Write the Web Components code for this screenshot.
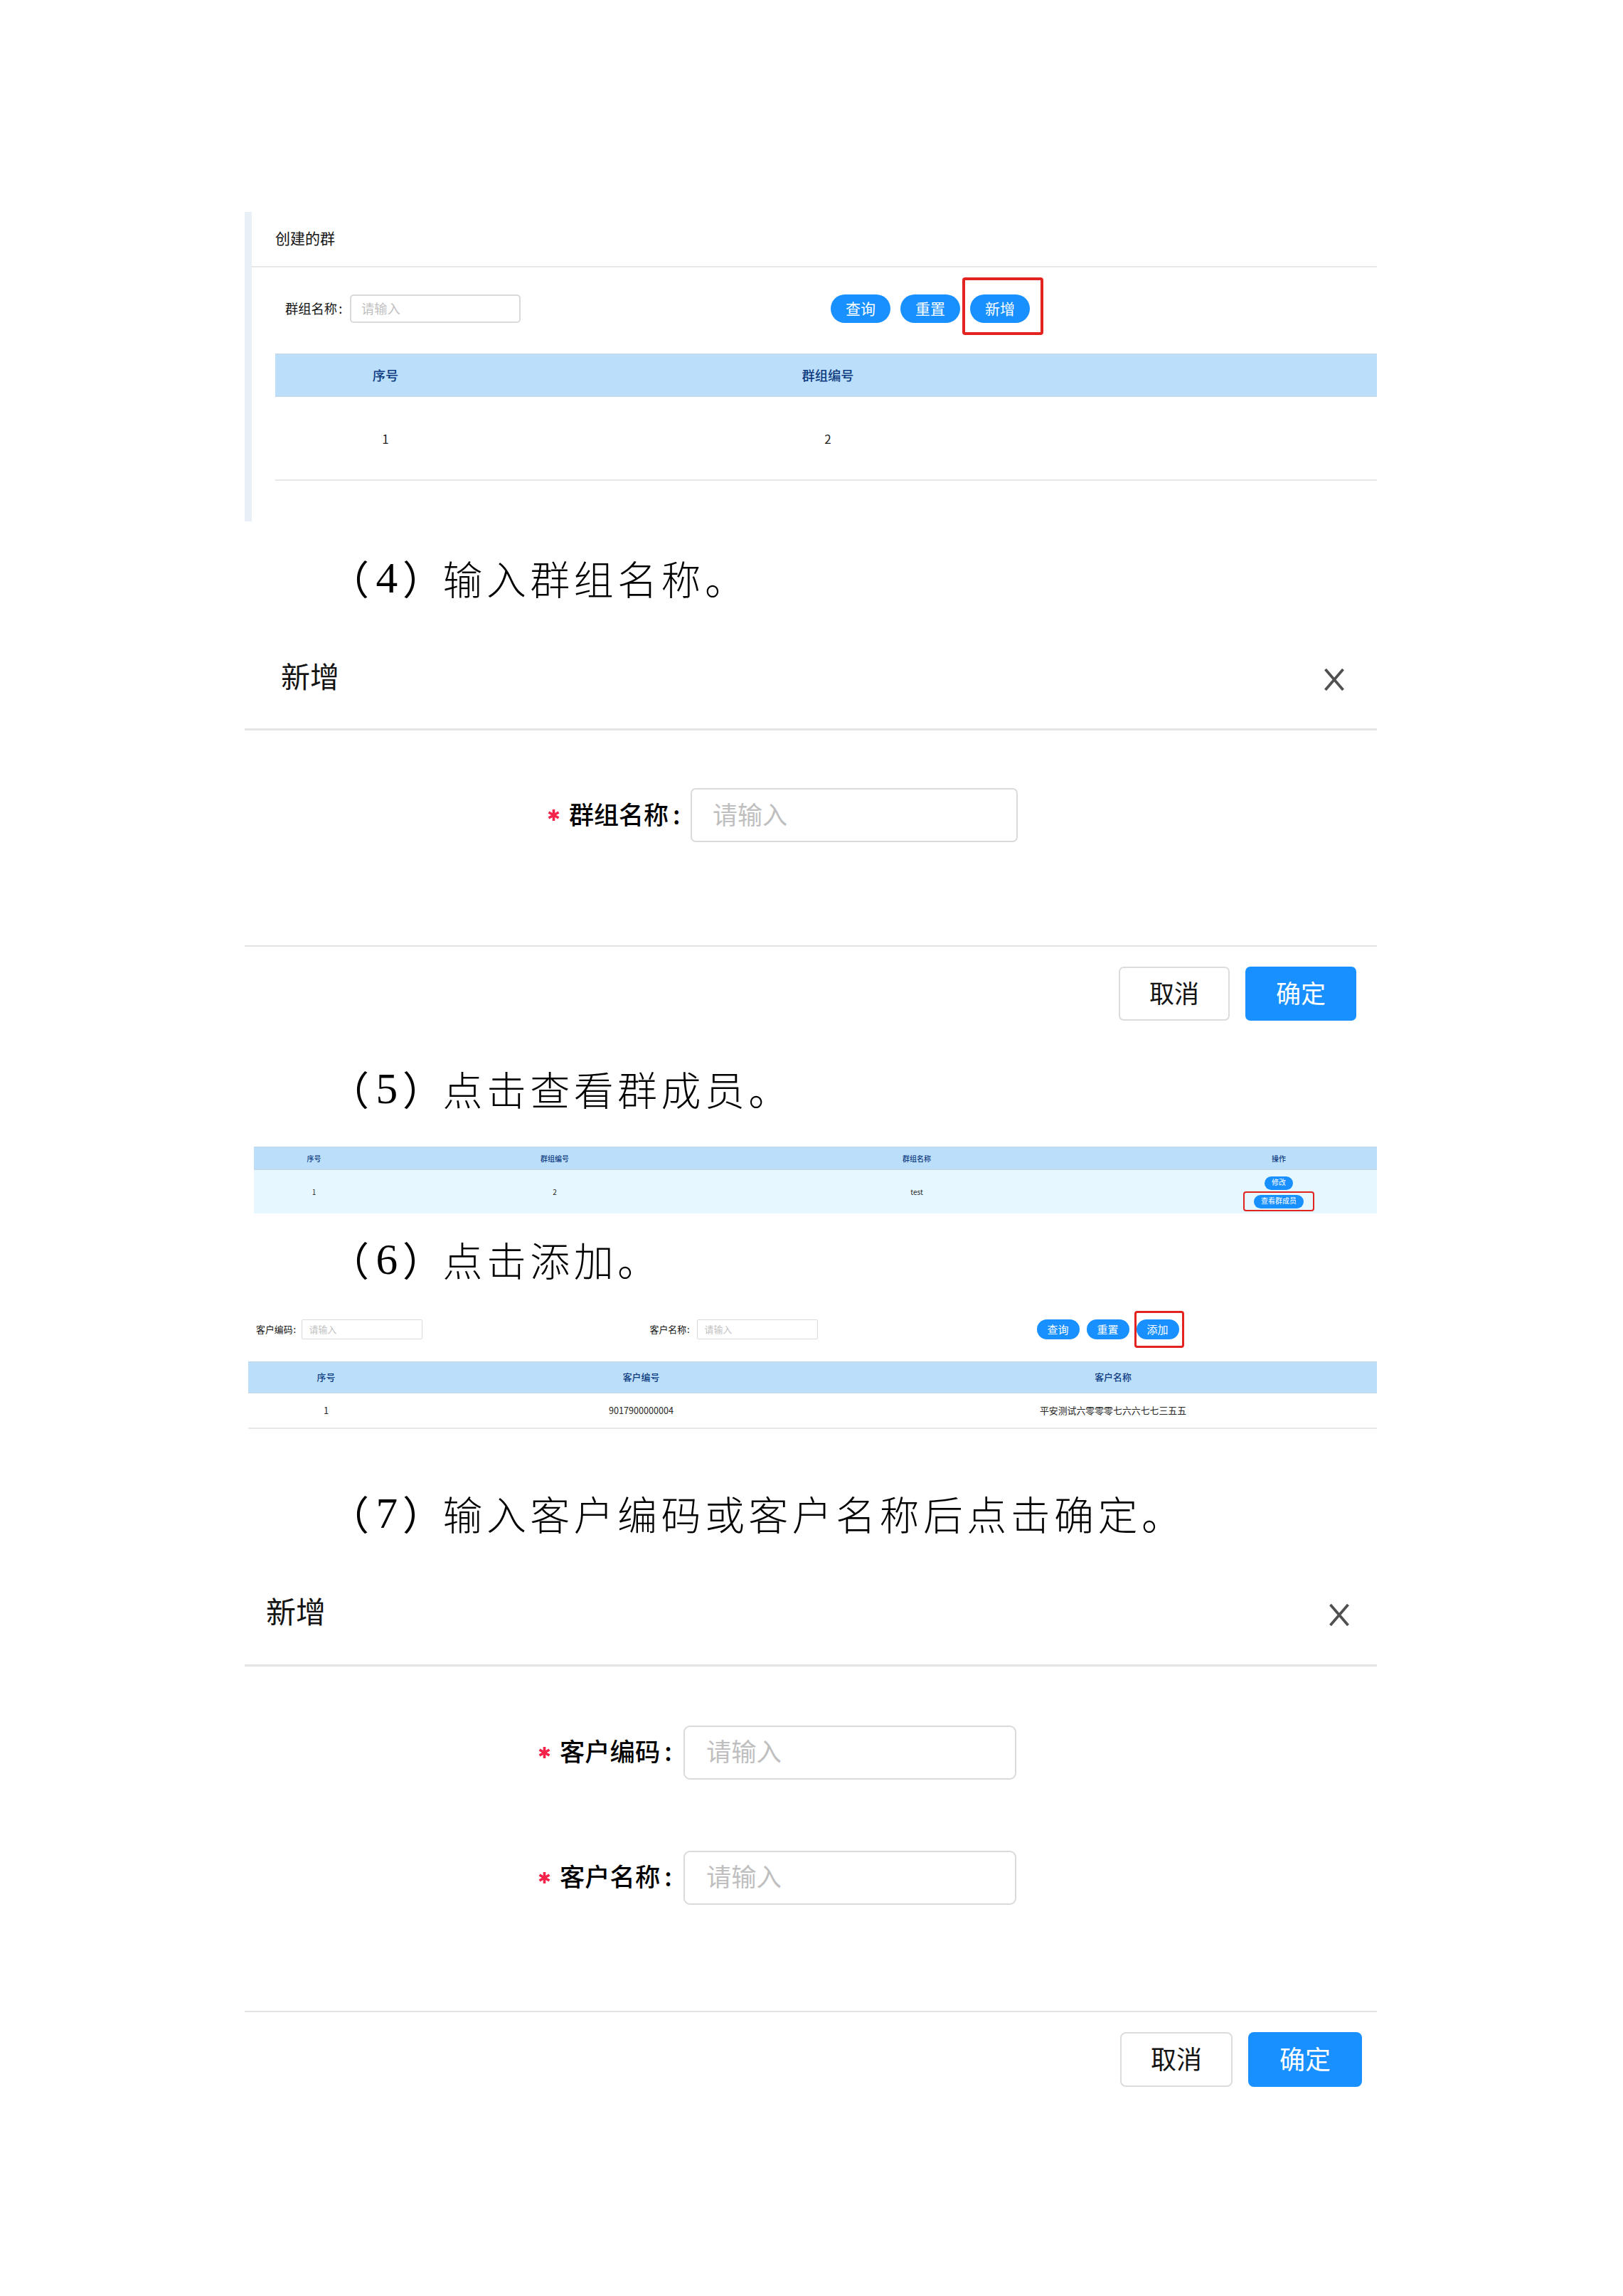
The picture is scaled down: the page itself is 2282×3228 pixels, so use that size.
<!DOCTYPE html>
<html lang="zh-CN">
<head>
<meta charset="utf-8">
<title>群组管理操作说明</title>
<style>
html,body{margin:0;background:#fff}
body{width:2282px;height:3228px;overflow:hidden;font-family:"Noto Sans CJK SC",sans-serif;color:#141414}
</style>
</head>
<body>
<manual-page></manual-page>
<script>
const define=(name,html)=>{
  const t=document.createElement('template');
  t.innerHTML=html;
  customElements.define(name,class extends HTMLElement{
    constructor(){super();this.attachShadow({mode:'open'}).appendChild(t.content.cloneNode(true));}
  });
};

/* Numbered instruction line */
define('step-line',`<style>
:host{display:flex;align-items:center;box-sizing:border-box;padding-left:119px;height:var(--h);font-size:56px;letter-spacing:5.4px;font-weight:300;line-height:62px;color:#000;white-space:nowrap}
.n{font-family:"Liberation Serif",serif;font-size:61.4px;letter-spacing:0;font-weight:400;margin:0 7px 0 4px}
.p{font-weight:400}
.t{margin-left:-5px}
</style><span class="p">（</span><span class="n"><slot name="n"></slot></span><span class="p">）</span><span class="t"><slot></slot></span>`);

/* Button: pill by default, "plain" for outlined */
define('ui-button',`<style>
:host{display:flex;align-items:center;justify-content:center;box-sizing:border-box;flex:none;width:var(--w);height:var(--h);border-radius:var(--r,99px);background:#1890ff;color:#fff;font-size:var(--f);line-height:1;white-space:nowrap}
:host([plain]){background:#fff;color:#141414;border:2px solid #dcdcdc}
span{transform:translateY(var(--dy,-1px))}
</style><span><slot></slot></span>`);

/* Red frame laid over the control it points out */
define('call-out',`<style>
:host{display:flex;position:relative;flex:none}
i{position:absolute;inset:var(--inset);border:var(--b,4px) solid #e2231f;border-radius:4px}
</style><slot></slot><i></i>`);

/* Label + input */
define('form-field',`<style>
:host{display:flex;align-items:center;flex:none;font-size:var(--f);line-height:1;white-space:nowrap}
.s{display:none;width:17px;height:18px;margin-right:var(--sg,13px)}
:host([required]) .s{display:block}
:host([required]) .l{font-weight:500;color:#000}
.l{width:var(--lw);transform:translateY(var(--ty,-1px))}
.c{margin-left:var(--cg,0)}
.i{box-sizing:border-box;display:flex;align-items:center;width:var(--iw);height:var(--ih);border:var(--b,2px) solid #dadada;border-radius:var(--r,5px);padding-left:var(--p);color:#bfbfbf;background:#fff}
.i span{transform:translateY(var(--ty,-1px))}
</style><svg class="s" viewBox="0 0 17 18"><path d="M8.500 1V17M1.500 5L15.500 13M15.500 5L1.500 13" stroke="#f5224a" stroke-width="3.600" fill="none"/></svg><span class="l"><slot></slot><span class="c">:</span></span><span class="i"><span><slot name="ph">请输入</slot></span></span>`);

define('data-row',`<style>
:host{display:grid;grid-template-columns:var(--cols);align-items:center;box-sizing:border-box;height:var(--h);overflow:hidden;text-align:center;line-height:1;font-size:var(--f);color:#262626}
:host([head]){background:#bbdefb;color:#0d3b80;font-weight:500;border:solid #c1daef;border-width:2px 0}
</style><slot></slot>`);

define('data-table',`<style>:host{display:block}</style><slot></slot>`);

/* Dialog with title bar, form body and footer */
define('modal-dialog',`<style>
:host{display:flex;flex-direction:column;width:1592px}
header{display:flex;align-items:center;justify-content:space-between;box-sizing:border-box;height:var(--hh);padding:0 var(--pr) var(--pb) var(--pl);border-bottom:3px solid #e5e5e5;font-size:var(--tf,41px);line-height:1}
header span{transform:translateY(-4px)}
svg{width:30px;height:31px;transform:translateY(var(--xy,2px))}
main{display:flex;flex-direction:column;box-sizing:border-box;height:var(--bh);padding:var(--bt) 0 0 var(--bl);gap:var(--gap,0)}
footer{display:flex;justify-content:flex-end;border-top:2px solid #e2e2e2;padding:var(--ft) var(--fr) 0 0;gap:22px;--dy:-3px}
</style><header><span><slot name="title"></slot></span><svg viewBox="0 0 30 31"><path d="M2.500 1L27.500 30M27.500 1L2.500 30" stroke="#505050" stroke-width="3.800" fill="none"/></svg></header>
<main><slot></slot></main><footer><slot name="footer"></slot></footer>`);

define('manual-page',`<style>
:host{display:flex;flex-direction:column;box-sizing:border-box;width:2282px;height:3228px;padding:298px 346px 0 344px;background:#fff}
.groups{height:435px;box-sizing:border-box;border-left:10px solid #e9eff6;display:flex;flex-direction:column}
.ttl{box-sizing:border-box;height:78px;padding:26px 0 0 33px;font-size:21px;line-height:21px;border-bottom:2px solid #e8e8e8}
.bar{display:flex;align-items:center}
.groups .bar{height:121px;padding:0 0 5px 47px;box-sizing:border-box}
.groups .bar form-field{--f:18.300px;--lw:91px;--cg:2px;--iw:240px;--ih:40px;--p:14px}
.groups .btns{display:flex;gap:14px;margin-left:436px;--w:84px;--h:40px;--f:21px;--r:20px}
.groups data-table{margin-left:33px;--cols:310px 934px 305px;--f:18.300px}
.num{font-size:17px}
.members{margin-left:13px;--cols:169px 508px 510px 508px;--f:10px;height:95px}
.members data-row:not([head]){background:#e6f7ff}
.ops{display:flex;flex-direction:column;align-items:center;gap:7px;padding-top:1px}
.clients{height:166px;display:flex;flex-direction:column}
.clients .bar{height:28px;padding-left:16px}
.clients form-field{--f:12.900px;--lw:63.500px;--cg:1px;--iw:170px;--ih:28px;--p:10px;--r:2px;--b:1.500px;--ty:0px}
.clients .btns{display:flex;gap:10px;margin-left:308px;--w:60px;--h:28px;--f:15px;--r:14px}
.clients data-table{margin:31px 0 0 5px;--cols:219px 667px 660px;--f:12.900px}
.id{font-size:12.600px}
modal-dialog{--ty:-3px}
</style>
<section class="groups">
 <div class="ttl">创建的群</div>
 <div class="bar"><form-field>群组名称</form-field>
  <div class="btns"><ui-button>查询</ui-button><ui-button>重置</ui-button><call-out style="--inset:-24px -19px -17px -11px"><ui-button>新增</ui-button></call-out></div></div>
 <data-table><data-row head style="--h:61px"><span>序号</span><span>群组编号</span></data-row>
 <data-row style="--h:118px;border-bottom:2px solid #e8e8e8"><span class="num">1</span><span class="num">2</span></data-row></data-table>
</section>
<step-line style="--h:158px"><span slot="n">4</span>输入群组名称。</step-line>
<modal-dialog style="--hh:136px;--pl:51px;--pr:45px;--pb:8px;--bh:302px;--bt:81px;--bl:426px;--ft:28px;--fr:29px;height:557px">
 <span slot="title">新增</span>
 <form-field required style="--f:35px;--lw:171px;--cg:6px;--iw:460px;--ih:76px;--p:29px;--b:2.500px;--r:7px">群组名称</form-field>
 <ui-button plain slot="footer" style="--w:156px;--h:76px;--f:35px;--r:7px">取消</ui-button>
 <ui-button slot="footer" style="--w:156px;--h:76px;--f:35px;--r:7px">确定</ui-button>
</modal-dialog>
<step-line style="--h:164px"><span slot="n">5</span>点击查看群成员。</step-line>
<data-table class="members">
 <data-row head style="--h:33px"><span>序号</span><span>群组编号</span><span>群组名称</span><span>操作</span></data-row>
 <data-row style="--h:61px"><span>1</span><span>2</span><span>test</span>
 <div class="ops"><ui-button style="--w:40px;--h:19px;--f:10px">修改</ui-button><call-out style="--inset:-5px -15px -4px -15px;--b:2px"><ui-button style="--w:70px;--h:19px;--f:10px">查看群成员</ui-button></call-out></div></data-row>
</data-table>
<step-line style="--h:126px;margin-bottom:22px"><span slot="n">6</span>点击添加。</step-line>
<section class="clients">
 <div class="bar"><form-field>客户编码</form-field><form-field style="margin-left:320px;--lw:66px">客户名称</form-field>
 <div class="btns"><ui-button>查询</ui-button><ui-button>重置</ui-button><call-out style="--inset:-12px -7px -12px -3px;--b:3px"><ui-button>添加</ui-button></call-out></div></div>
 <data-table><data-row head style="--h:45px"><span>序号</span><span>客户编号</span><span>客户名称</span></data-row>
 <data-row style="--h:50px;border-bottom:2px solid #e8e8e8"><span>1</span><span class="id">9017900000004</span><span>平安测试六零零零七六六七七三五五</span></data-row></data-table>
</section>
<step-line style="--h:212px"><span slot="n">7</span>输入客户编码或客户名称后点击确定。</step-line>
<modal-dialog style="--hh:110px;--pl:30px;--pr:38px;--pb:37px;--tf:42px;--bh:484px;--bt:83px;--bl:413px;--gap:100px;--ft:28px;--fr:21px">
 <span slot="title">新增</span>
 <form-field required style="--f:35.300px;--lw:174px;--cg:6px;--iw:468px;--ih:76px;--p:30px;--b:2.500px;--r:9px">客户编码</form-field>
 <form-field required style="--f:35.300px;--lw:174px;--cg:6px;--iw:468px;--ih:76px;--p:30px;--b:2.500px;--r:9px">客户名称</form-field>
 <ui-button plain slot="footer" style="--w:158px;--h:77px;--f:36px;--r:8px">取消</ui-button>
 <ui-button slot="footer" style="--w:160px;--h:77px;--f:36px;--r:8px">确定</ui-button>
</modal-dialog>`);
</script>
</body>
</html>
